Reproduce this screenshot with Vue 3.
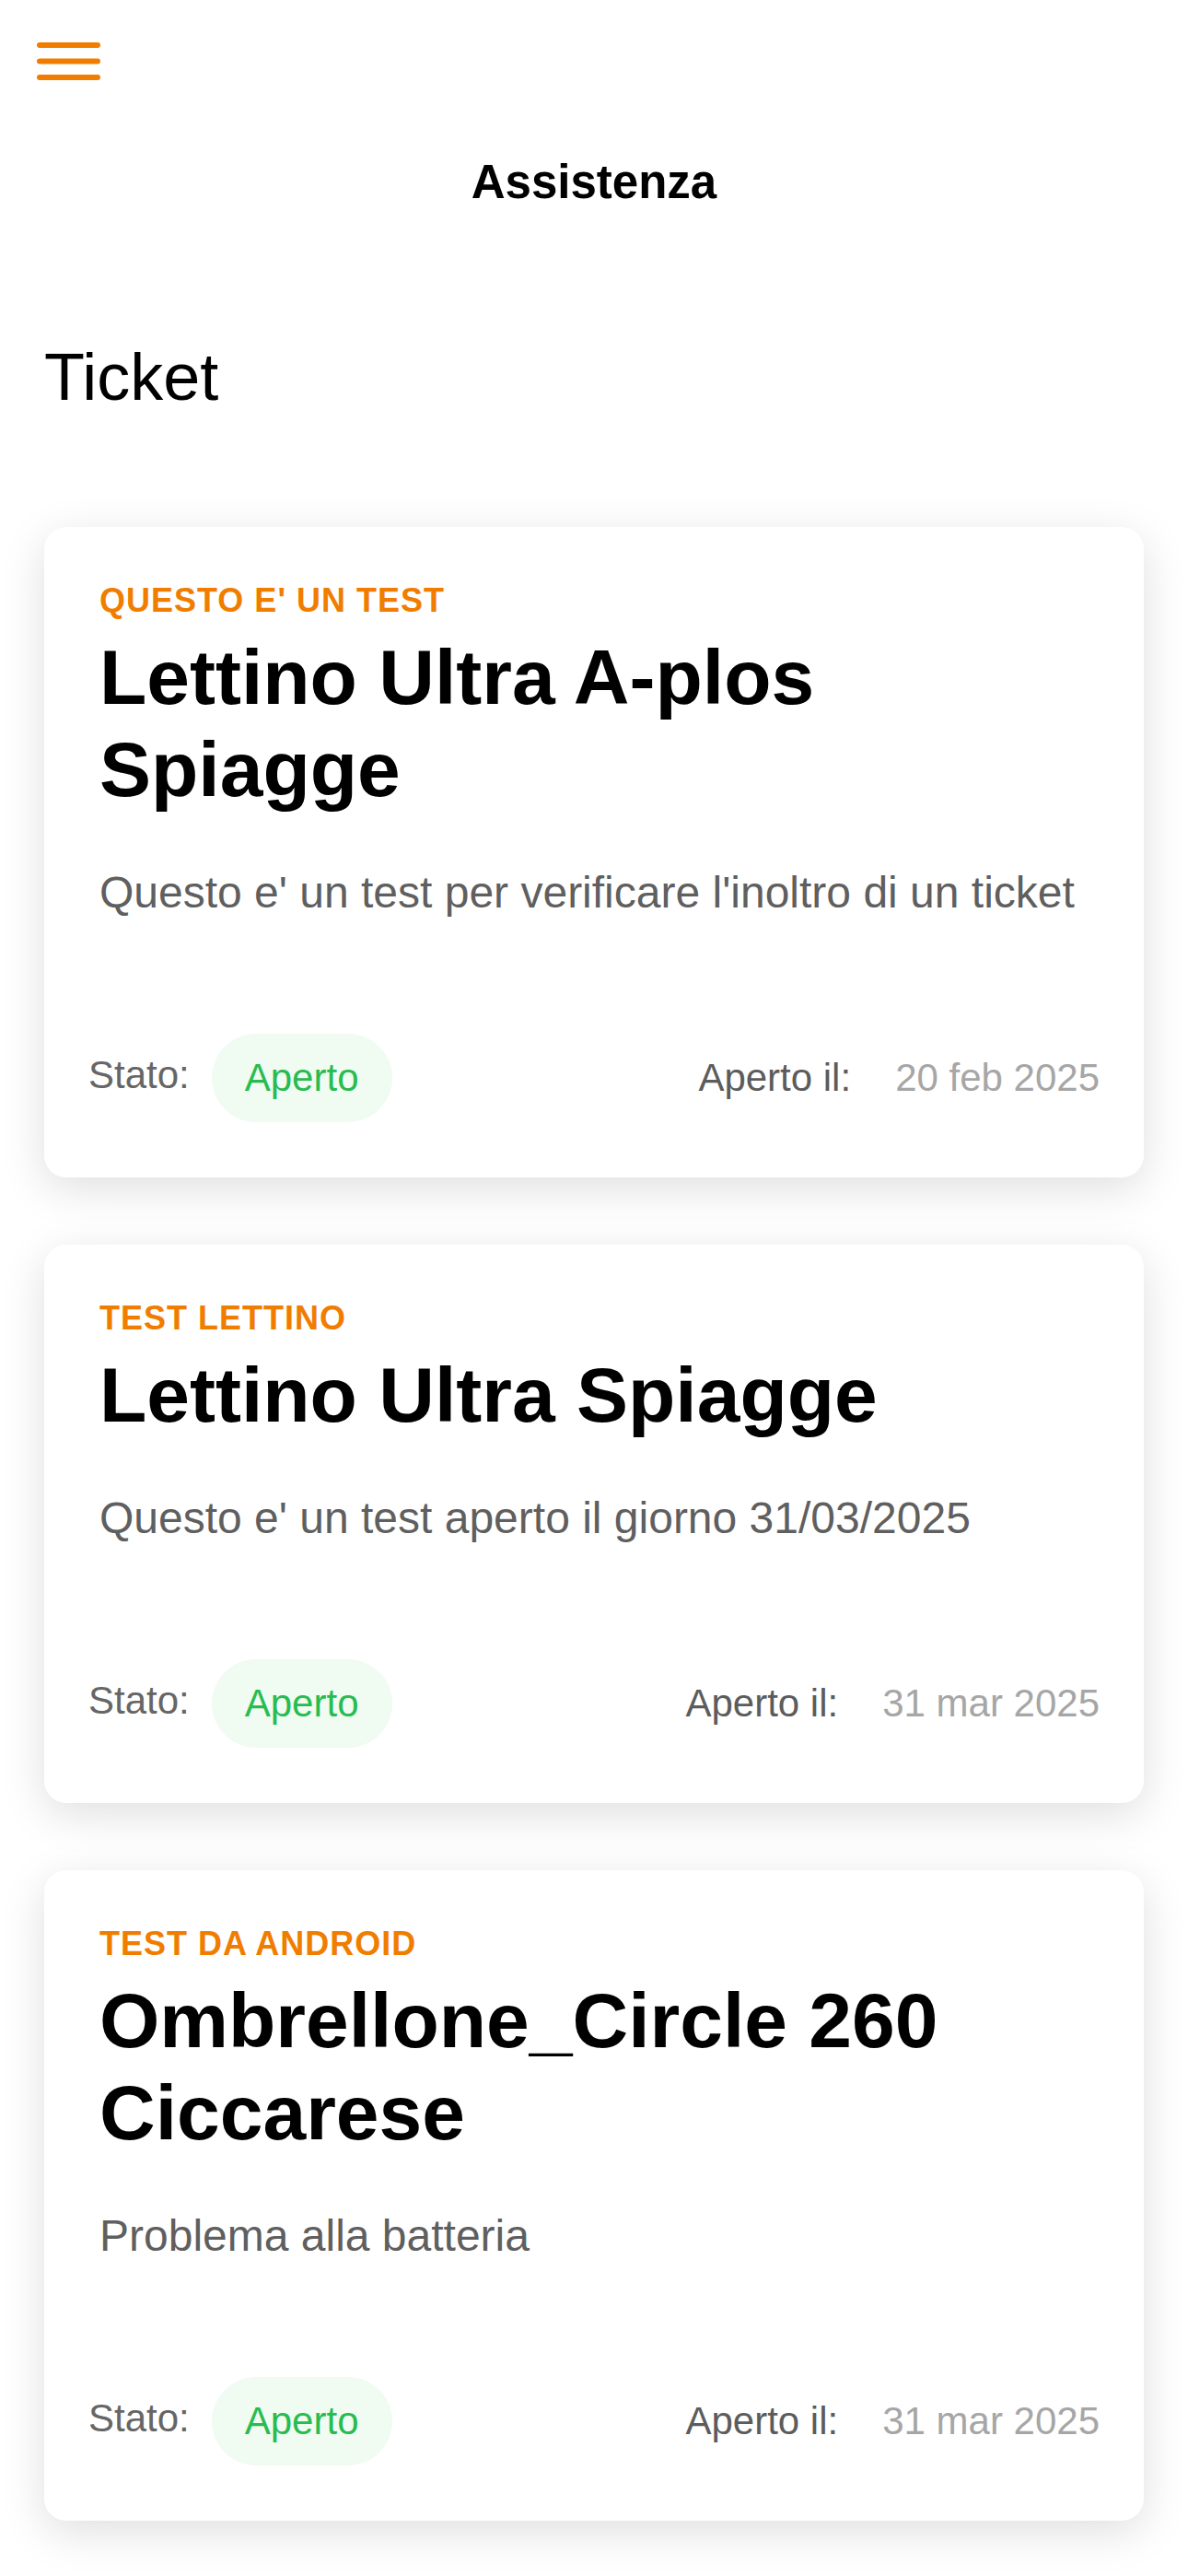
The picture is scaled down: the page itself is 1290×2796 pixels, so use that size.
<template>
  <div class="page">
    <header class="topbar">
      <button class="menu" type="button" aria-label="Menu">
        <svg width="72" height="44" viewBox="0 0 72 44" aria-hidden="true">
          <path d="M3 5H66M3 22.5H66M3 40H66" />
        </svg>
      </button>
      <h1>Assistenza</h1>
    </header>

    <main>
      <h2>Ticket</h2>

      <article v-for="ticket in tickets" :key="ticket.id" class="card">
        <div class="body">
          <p class="subject">{{ ticket.subject }}</p>
          <h3>{{ ticket.product }}</h3>
          <p class="message">{{ ticket.message }}</p>
        </div>
        <div class="footer">
          <div class="state">
            <span class="state-label">Stato:</span>
            <span class="badge">{{ ticket.state }}</span>
          </div>
          <div class="opened">
            <span>Aperto il:</span>
            <time>{{ ticket.date }}</time>
          </div>
        </div>
      </article>
    </main>
  </div>
</template>

<script setup>
import { ref } from 'vue';

const tickets = ref([
  {
    id: 1,
    subject: "Questo e' un test",
    product: 'Lettino Ultra A-plos Spiagge',
    message: "Questo e' un test per verificare l'inoltro di un ticket",
    state: 'Aperto',
    date: '20 feb 2025',
  },
  {
    id: 2,
    subject: 'Test lettino',
    product: 'Lettino Ultra Spiagge',
    message: "Questo e' un test aperto il giorno 31/03/2025",
    state: 'Aperto',
    date: '31 mar 2025',
  },
  {
    id: 3,
    subject: 'Test da Android',
    product: 'Ombrellone_Circle 260 Ciccarese',
    message: 'Problema alla batteria',
    state: 'Aperto',
    date: '31 mar 2025',
  },
]);
</script>

<style>
body {
  background: #fff;
}
</style>

<style scoped>
.page {
  font-family: "Liberation Sans", Arial, sans-serif;
  color: #000;
}

h1, h2, h3, p {
  margin: 0;
}

.topbar {
  padding: 44px 40px 48px;
}

.menu {
  display: block;
  padding: 0;
  border: none;
  background: none;
  cursor: pointer;
}

.menu svg {
  display: block;
  fill: none;
  stroke: #f07d00;
  stroke-width: 6;
  stroke-linecap: round;
}

h1 {
  margin-top: 80px;
  font-size: 51px;
  line-height: 60px;
  text-align: center;
}

main {
  padding: 88px 48px 0;
}

h2 {
  margin-bottom: 118px;
  font-size: 72px;
  line-height: 90px;
  font-weight: 400;
}

.card {
  margin-bottom: 73px;
  padding: 60px 48px;
  border-radius: 24px;
  background: #fff;
  box-shadow: 0 12px 48px rgba(0, 0, 0, 0.13);
}

.body {
  padding: 0 12px;
}

.subject {
  color: #f07d00;
  font-size: 36px;
  line-height: 40px;
  font-weight: 700;
  letter-spacing: 1px;
  text-transform: uppercase;
}

h3 {
  margin: 13px 0 48px;
  font-size: 84px;
  line-height: 100px;
}

.message {
  color: #5f5f5f;
  font-size: 48px;
  line-height: 72px;
}

.footer {
  display: flex;
  justify-content: space-between;
  align-items: center;
  margin-top: 117px;
  color: #5c5c5c;
  font-size: 42px;
  line-height: 48px;
}

.state,
.opened {
  display: flex;
}

.state {
  gap: 24px;
}

.state-label {
  padding-top: 21px;
  color: #666;
}

.badge {
  padding: 24px 36px;
  border-radius: 48px;
  background: #f0fbf2;
  color: #28bc50;
}

.opened {
  gap: 48px;
}

time {
  color: #a6a6a6;
}
</style>
